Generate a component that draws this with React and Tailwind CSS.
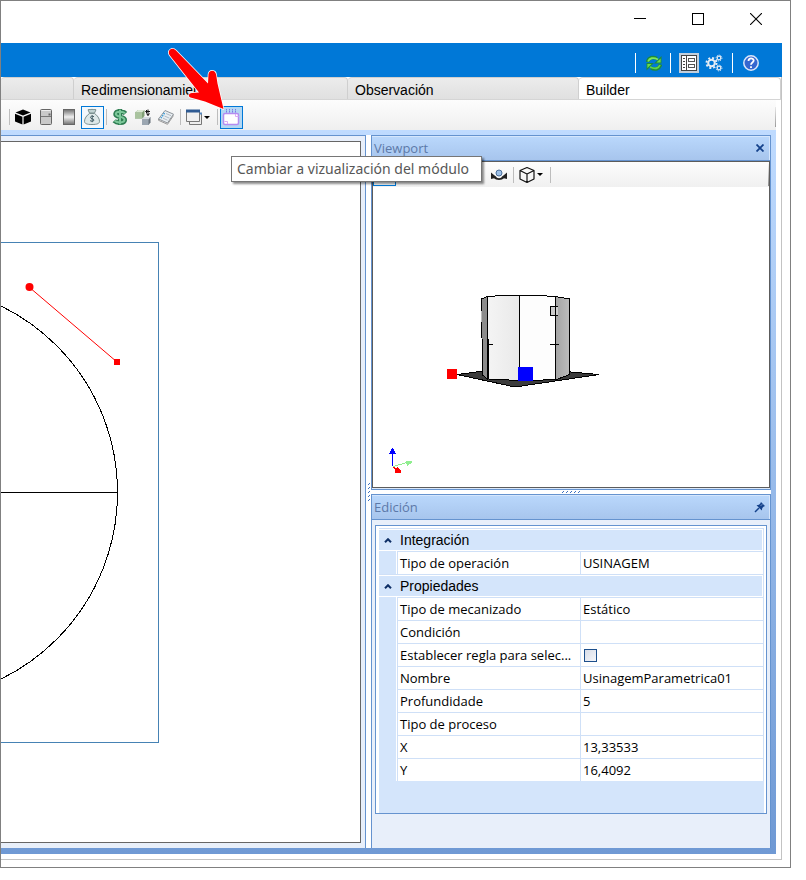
import clsx from "clsx";

const tabs = [
  { id: "blank", label: "", width: "w-[73px]" },
  { id: "resize", label: "Redimensionamiento", width: "w-[274px]" },
  { id: "notes", label: "Observación", width: "w-[231px]" },
  { id: "builder", label: "Builder", width: "flex-1", active: true },
];

const groups = [
  {
    title: "Integración",
    rows: [{ label: "Tipo de operación", value: "USINAGEM" }],
  },
  {
    title: "Propiedades",
    rows: [
      { label: "Tipo de mecanizado", value: "Estático" },
      { label: "Condición", value: "" },
      { label: "Establecer regla para selec...", checkbox: true },
      { label: "Nombre", value: "UsinagemParametrica01" },
      { label: "Profundidade", value: "5" },
      { label: "Tipo de proceso", value: "" },
      { label: "X", value: "13,33533" },
      { label: "Y", value: "16,4092" },
    ],
  },
];

/* ---------- icons ---------- */

function CubeIcon() {
  return (
    <svg width="18" height="18" viewBox="0 0 18 18">
      <path d="M9 1.5 16.5 4.5 9 7.5 1.5 4.5z" />
      <path d="M1 5.7 8.4 8.7V16.6L1 13.4z" />
      <path d="M17 5.7 9.6 8.7V16.6L17 13.4z" />
    </svg>
  );
}

function DoorIcon() {
  return (
    <svg width="14" height="18" viewBox="0 0 14 18">
      <rect x="1.5" y="1.5" width="11" height="15" rx="1" fill="#c9c9c9" stroke="#666" />
      <path d="M2 8.5h10" stroke="#777" />
      <path d="M2.5 2.5h9" stroke="#eee" />
      <path d="M9.5 5.5h2v2h-2z" fill="#666" />
    </svg>
  );
}

function MetalIcon() {
  return (
    <svg width="14" height="18" viewBox="0 0 14 18">
      <defs>
        <linearGradient id="metal" x1="0" y1="0" x2="0" y2="1">
          <stop offset="0" stopColor="#707070" />
          <stop offset="0.5" stopColor="#f0f0f0" />
          <stop offset="1" stopColor="#707070" />
        </linearGradient>
      </defs>
      <rect x="1.5" y="1.5" width="11" height="15" fill="url(#metal)" stroke="#666" />
    </svg>
  );
}

function MoneyBagIcon() {
  return (
    <svg width="18" height="18" viewBox="0 0 18 18">
      <path
        d="M6.5 5.5C3.5 7.5 1.5 10.5 1.5 13.3 1.5 15.5 3.5 16.5 9 16.5s7.5-1 7.5-3.2c0-2.8-2-5.8-5-7.8z"
        fill="#dde8e8"
        stroke="#7b9090"
      />
      <path d="M6.5 5 5 1.8c1.3-.8 2.5.3 4-.5 1.5.8 2.7-.3 4 .5L11.5 5z" fill="#c2d4d4" stroke="#7b9090" />
      <path d="M11 8.7c-1.500-1-3.700-.6-3.500.9.2 1.500 3.300.8 3.400 2.400.1 1.500-2.400 1.700-3.900.6M9.200 7.200v7" fill="none" stroke="#445e66" />
    </svg>
  );
}

function DollarIcon() {
  return (
    <svg width="18" height="18" viewBox="0 0 18 18" fill="none">
      <path
        d="M14.5 5.5C12.5 3.3 5 2.5 4.5 6 4 9.6 14 8 13.8 12c-.3 3.6-8 3.5-10.6.8M9 1v16"
        stroke="#2e7d52"
        strokeWidth="4.5"
      />
      <path
        d="M14 5.3C12 3.5 5 3 4.8 6c-.2 3.2 9 2 8.7 6-.3 3.2-7.500 3-9.800.8M9 1.8v14.400"
        stroke="#7cc799"
        strokeWidth="2"
      />
    </svg>
  );
}

function ConvertIcon() {
  return (
    <svg width="18" height="18" viewBox="0 0 18 18">
      <path d="M1 4.5 4 2h6.5v6L8 10.5H1z" fill="#7f9f74" />
      <path d="M1 4.5 4 2h6.5L8 4.5z" fill="#dbe8d4" />
      <path d="M1 4.5h7v6H1z" fill="#a9c39e" />
      <path d="M8 11.5 10 9h6.5v5.5L14.5 17H8z" fill="#68727c" />
      <path d="M8 11.5 10 9h6.5l-2 2.5z" fill="#d5dbe1" />
      <path d="M8 11.5h6.5V17H8z" fill="#9ba6b1" />
      <path d="M12 3.500h4M14 1.500v6M12.500 5.500 14 7.500l1.500-2M13 2l-1.500 1.500L13 5" fill="none" stroke="#111" />
    </svg>
  );
}

function SheetIcon() {
  return (
    <svg width="18" height="18" viewBox="0 0 18 18">
      <path d="M1.5 11 8 2.5l8.5 3.7L10.5 15z" fill="#e9eef2" stroke="#8e959b" />
      <path d="M1.5 11v1.3l9 4L16.5 7.5" fill="none" stroke="#999" />
      <path d="M7.5 5 4 10.2" stroke="#3c9bd6" strokeWidth="1.5" strokeDasharray="1.5 1" />
      <path d="m9 5.5 5 2.2M7.5 8l5 2.2M6 10.2l4.5 2" stroke="#b3bdc5" />
    </svg>
  );
}

function WindowsIcon() {
  return (
    <svg width="18" height="18" viewBox="0 0 18 18">
      <path d="M4.5 5.5h12v11h-12z" fill="#eee" stroke="#777" />
      <path d="M1.5 2.5h13v11h-13z" fill="#f0f0f0" stroke="#777" />
      <path d="M1 1.5h14v3H1z" fill="#2f5b93" />
      <path d="M15 4.5h2v2h-2z" fill="#5488c0" />
    </svg>
  );
}

function ModuleViewIcon() {
  return (
    <svg width="18" height="18" viewBox="0 0 18 18">
      <rect x="1.5" y="5.5" width="15" height="11" rx="1.5" fill="#fff" stroke="#b58cf0" strokeWidth="1.5" />
      <path d="M4.5 1v4M7.5 1v4M10.5 1v4M13.5 1v4" stroke="#7e78e8" strokeDasharray="1.5 .5" />
      <path d="M2.5 13.5h3v2.5M13.5 6v2.5h3" fill="none" stroke="#dba8f5" />
    </svg>
  );
}

function OrbitIcon() {
  return (
    <svg width="18" height="18" viewBox="0 0 18 18">
      <path d="M4 11c3 2.700 7 2.700 10 0" fill="none" stroke="#222" strokeWidth="2" />
      <path d="M1 13V6.500l6 5zM17 13V6.500l-6 5z" fill="#222" />
      <circle cx="9" cy="7" r="3" fill="#9ec1e8" stroke="#4c6f9a" />
    </svg>
  );
}

function WireCubeIcon() {
  return (
    <svg width="18" height="18" viewBox="0 0 18 18" fill="none" stroke="#111" strokeWidth="1.2" strokeLinejoin="round">
      <path d="M9 1.5 16 4.5v8.500L9 16.500 2 13V4.500zM2 4.500l7 3.500 7-3.500M9 8v8.500" />
    </svg>
  );
}

function RefreshIcon() {
  return (
    <svg width="16" height="18" viewBox="0 0 16 18" fill="none">
      <path d="M1.5 8C2.500 3.500 7 2.500 11 4.500" stroke="#1f8a3a" strokeWidth="3.6" />
      <path d="M15.500 2v7.500H8z" fill="#1f8a3a" />
      <path d="M2 7.500C3.500 4 7 3 12 5.500" stroke="#7fe85a" strokeWidth="1.8" />
      <path d="M14.600 4.500v4H10.500z" fill="#6ddd4e" />
      <path d="M14.500 10.500c-1 4.500-5.500 5.500-9.500 3.500" stroke="#1f8a3a" strokeWidth="3.6" />
      <path d="M.5 16.500V9H8z" fill="#1f8a3a" />
      <path d="M14 11c-1.500 3.500-5 4.500-10 2" stroke="#5fd548" strokeWidth="1.8" />
      <path d="M1.400 14V10h4.100z" fill="#6ddd4e" />
    </svg>
  );
}

function FormIcon() {
  return (
    <svg width="16" height="16" viewBox="0 0 16 16" shapeRendering="crispEdges">
      <path d="M.5.5h15v15H.5z" fill="#fff" stroke="#444" />
      <path d="M5.5 1v14" stroke="#444" />
      <path d="M1.5 3.5H4M1.5 6.5H4M1.5 9.5H4M1.5 12.5H4" stroke="#444" />
      <path d="M7.5 3.5h6v3h-6zM7.5 9.5h6v3h-6z" fill="none" stroke="#555" />
    </svg>
  );
}

function GearsIcon() {
  return (
    <svg width="18" height="18" viewBox="0 0 18 18" fill="none" stroke="#e6edf5">
      <circle cx="6.5" cy="9" r="3.3" strokeWidth="2" />
      <circle cx="6.5" cy="9" r="5" strokeWidth="2" strokeDasharray="2 1.93" />
      <circle cx="14" cy="4" r="1.8" strokeWidth="1.2" />
      <circle cx="14" cy="4" r="2.9" strokeWidth="1" strokeDasharray="1.2 1.08" />
      <circle cx="14" cy="14" r="1.8" strokeWidth="1.2" />
      <circle cx="14" cy="14" r="2.9" strokeWidth="1" strokeDasharray="1.2 1.08" />
    </svg>
  );
}

function HelpIcon() {
  return (
    <svg width="18" height="18" viewBox="0 0 18 18">
      <circle cx="9" cy="9" r="7.2" fill="#3567d0" stroke="#dbe6fa" strokeWidth="1.5" />
      <path d="M6.5 7c0-3.500 5.200-3.300 5.200-.4C11.700 8.500 9 8.600 9 10.800M9 12.200v1.800" fill="none" stroke="#fff" strokeWidth="1.8" />
    </svg>
  );
}

function PinIcon() {
  return (
    <svg width="12" height="12" viewBox="0 0 12 12">
      <path d="M7 1l4 4-1.500.7L8.300 7l-.5 2.500-5.300-5.300L5 3.700 6.300 2.500z" fill="#15428b" />
      <path d="M5 7 1 11" stroke="#15428b" strokeWidth="1.5" />
      <path d="M7 4.5 8 3.5" stroke="#c4dcfb" />
    </svg>
  );
}

function Caret() {
  return (
    <svg width="6" height="3" viewBox="0 0 6 3">
      <path d="M0 0h6L3 3z" />
    </svg>
  );
}

/* ---------- toolbar parts ---------- */

function ToolButton({ label, children, className }) {
  return (
    <button
      type="button"
      aria-label={label}
      className={clsx("flex h-[23px] w-[23px] shrink-0 items-center justify-center pr-px", className)}
    >
      {children}
    </button>
  );
}

function DropButton({ label, children }) {
  return (
    <button
      type="button"
      aria-label={label}
      className="flex h-[23px] w-8 shrink-0 items-center gap-px pl-0.5"
    >
      {children}
      <Caret />
    </button>
  );
}

function Separator() {
  return (
    <div className="flex w-[5px] shrink-0 justify-center">
      <div className="h-4 w-px bg-[#bdbdbd]" />
    </div>
  );
}

function TitleBar() {
  return (
    <header className="flex h-[42px] shrink-0 justify-end pr-[5px] pb-1.5">
      <button type="button" aria-label="Minimizar" className="flex w-[58px] items-center justify-center">
        <svg width="12" height="12" viewBox="0 0 12 12" shapeRendering="crispEdges">
          <path d="M0 5.5h12" stroke="#000" />
        </svg>
      </button>
      <button type="button" aria-label="Maximizar" className="flex w-[58px] items-center justify-center">
        <svg width="12" height="12" viewBox="0 0 12 12" shapeRendering="crispEdges">
          <path d="M.5.5h11v11H.5z" fill="none" stroke="#000" />
        </svg>
      </button>
      <button type="button" aria-label="Cerrar" className="flex w-[58px] items-center justify-center">
        <svg width="12" height="12" viewBox="0 0 12 12">
          <path d="M0 0l12 12M12 0 0 12" stroke="#000" strokeWidth="1.1" />
        </svg>
      </button>
    </header>
  );
}

function BlueBar() {
  return (
    <div className="flex h-[34px] shrink-0 items-center justify-end bg-[#0078d7] pt-1.5 pr-[22px]">
      <div className="mr-[10px] h-5 w-px bg-white" />
      <button type="button" aria-label="Actualizar">
        <RefreshIcon />
      </button>
      <div className="mx-2 h-5 w-px bg-white" />
      <button type="button" aria-label="Formulario" className="mr-1.5 flex size-5 items-center justify-center bg-[#c2cfdc]">
        <FormIcon />
      </button>
      <button type="button" aria-label="Configuración">
        <GearsIcon />
      </button>
      <div className="mx-[9px] h-5 w-px bg-white" />
      <button type="button" aria-label="Ayuda">
        <HelpIcon />
      </button>
    </div>
  );
}

function TabStrip() {
  return (
    <div role="tablist" className="flex h-[23px] shrink-0 border-b border-[#d5d5d5]">
      {tabs.map((tab) => (
        <button
          key={tab.id}
          type="button"
          role="tab"
          aria-selected={!!tab.active}
          aria-label={tab.label || "Inicio"}
          className={clsx(
            "rounded-t-sm border-t border-r pt-0.5 pl-[7px] text-left font-['Liberation_Sans',Arial,sans-serif] text-sm",
            tab.width,
            tab.active
              ? "border-[#d0d0d0] bg-white"
              : "border-[#cfcfcf] bg-linear-to-b from-[#ececec] to-[#e0e0e0]"
          )}
        >
          {tab.label}
        </button>
      ))}
    </div>
  );
}

function MainToolbar() {
  return (
    <div className="mr-[5px] flex h-[30px] shrink-0 items-center bg-linear-to-b from-[#fdfdfd] to-[#efefef] pt-1 pl-1.5">
      <Separator />
      <ToolButton label="Módulo"><CubeIcon /></ToolButton>
      <ToolButton label="Puerta"><DoorIcon /></ToolButton>
      <ToolButton label="Material"><MetalIcon /></ToolButton>
      <ToolButton label="Presupuesto" className="border border-[#0078d7] bg-[#f3f8fc]"><MoneyBagIcon /></ToolButton>
      <Separator />
      <ToolButton label="Precio"><DollarIcon /></ToolButton>
      <ToolButton label="Convertir"><ConvertIcon /></ToolButton>
      <ToolButton label="Lista"><SheetIcon /></ToolButton>
      <Separator />
      <DropButton label="Ventanas"><WindowsIcon /></DropButton>
      <Separator />
      <ToolButton label="Cambiar a vizualización del módulo" className="border border-[#0078d7] bg-[#b3d7f3]">
        <ModuleViewIcon />
      </ToolButton>
      <div className="ml-auto h-5 w-px bg-linear-to-b from-[#e8e8e8] to-[#9a9a9a]" />
    </div>
  );
}

/* ---------- panels ---------- */

function DrawingCanvas() {
  return (
    <section className="flex min-w-0 flex-1 border-t border-r border-[#6593cf] bg-[#e8effa] py-[5px] pr-1">
      <div className="min-w-0 flex-1 overflow-hidden border-y border-r border-[#666] bg-white">
        <svg width="359" height="690" viewBox="1 142 359 690" fill="none" shapeRendering="crispEdges">
          <path d="M1 242.5H158.5V742.5H1" stroke="#4682b4" />
          <circle cx="-90" cy="492.5" r="207.5" stroke="#000" />
          <path d="M1 492.5H118" stroke="#000" />
          <path d="M29 287 117 362" stroke="#f00" shapeRendering="auto" />
          <circle cx="29.5" cy="287" r="4" fill="#f00" shapeRendering="auto" />
          <path d="M114 359h6v6h-6z" fill="#f00" />
        </svg>
      </div>
    </section>
  );
}

function PanelHeader({ title, children }) {
  return (
    <div className="flex h-[25px] shrink-0 items-center justify-between border-b border-[#6593cf] bg-linear-to-b from-[#bad8fc] to-[#a7c5ed] pr-1 pl-0.5 shadow-[inset_0_1px_0_#d5e6fc,inset_-1px_0_0_#d5e6fc]">
      <h2 className="pt-0.5 text-[13px] text-[#5c79a8]">{title}</h2>
      {children}
    </div>
  );
}

function Scene() {
  return (
    <svg width="396" height="300" viewBox="373 187 396 300" fill="none" shapeRendering="crispEdges">
      <defs>
        <linearGradient id="sideRight" x1="0" y1="0" x2="1" y2="0">
          <stop offset="0" stopColor="#a3a3a3" />
          <stop offset="1" stopColor="#bcbcbc" />
        </linearGradient>
        <linearGradient id="front" x1="0" y1="0" x2="1" y2="0">
          <stop offset="0" stopColor="#f4f4f4" />
          <stop offset="1" stopColor="#e9e9e9" />
        </linearGradient>
      </defs>

      {/* ground */}
      <path d="M457 374.5 515 367 599 374.5 515 387z" fill="#3c3c3c" stroke="#000" />

      {/* body */}
      <path d="M481.5 299 487.5 296.5V379L482.5 375z" fill="#8c8c8c" stroke="#000" />
      <path d="M487.5 296.5 503 295.5H519.5V380.5L488.5 379z" fill="url(#front)" stroke="#000" />
      <path d="M519.5 295.5H538L555.5 296.5V379.5L519.5 381z" fill="#fdfdfd" stroke="#000" />
      <path d="M555.5 296.5 569.5 299V374.5L555.5 380z" fill="url(#sideRight)" stroke="#000" />
      <path d="M481.5 311v11" stroke="#bbb" />
      <path d="M488 344.5h5M550 344.5h9" stroke="#000" />
      <path d="M558 306.5h-7.5v9H558" fill="#ccc" stroke="#000" />
      <path d="M555.5 306v10" stroke="#000" />

      <path d="M447 369h10v10h-10z" fill="#f00" />
      <path d="M518 367h15v14h-15z" fill="#00f" />

      {/* axes */}
      <path d="M392.5 466V452" stroke="#00f" />
      <path d="M392.5 447.5 396 454h-7z" fill="#00f" />
      <path d="M393 466.5 407 462.5" stroke="#90ee90" />
      <path d="M406 461h6v2l-5 3z" fill="#90ee90" />
      <path d="M393 467l3 2" stroke="#f00" />
      <path d="M395 469l3-2 3 4v2h-6z" fill="#f00" />
    </svg>
  );
}

function ViewportPanel() {
  return (
    <section className="flex min-h-0 flex-1 flex-col border border-[#6593cf] bg-[#dce9fa] pb-px">
      <PanelHeader title="Viewport">
        <button type="button" aria-label="Cerrar panel" className="mr-0.5">
          <svg width="8" height="8" viewBox="0 0 8 8">
            <path d="M.5.5l7 7M7.5.5l-7 7" stroke="#15428b" strokeWidth="1.8" />
          </svg>
        </button>
      </PanelHeader>
      <div className="flex min-h-0 flex-1 flex-col border border-[#5c5c5c] bg-white">
        <div className="flex h-[25px] shrink-0 items-center bg-linear-to-b from-[#fdfdfd] to-[#f0f0f0]">
          <ToolButton label="Seleccionar" className="border border-[#0078d7] bg-[#f3f8fc]" />
          <ToolButton label="Girar" />
          <ToolButton label="Mover" />
          <ToolButton label="Acercar" />
          <ToolButton label="Encuadrar" />
          <ToolButton label="Orbitar"><OrbitIcon /></ToolButton>
          <Separator />
          <DropButton label="Vista"><WireCubeIcon /></DropButton>
          <Separator />
          <div className="ml-auto h-[22px] w-px bg-linear-to-b from-[#f4f4f4] to-[#8a8a8a]" />
        </div>
        <div className="min-h-0 flex-1 overflow-hidden">
          <Scene />
        </div>
      </div>
    </section>
  );
}

function PropertyRow({ row }) {
  const id = `prop-${row.label.slice(0, 5).toLowerCase().replace(/\W/g, "")}`;
  return (
    <tr className="h-[23px]">
      <td className="border-r border-white bg-[#d4e5fb] p-0" />
      <th scope="row" className="border-t border-l border-[#cfe0f7] bg-white py-0 pr-1 pl-0.5 text-left font-normal whitespace-nowrap">
        {row.checkbox ? <label htmlFor={id}>{row.label}</label> : row.label}
      </th>
      <td className="border-x border-t border-[#cfe0f7] bg-white py-0 pl-0.5">
        {row.checkbox ? (
          <input
            id={id}
            type="checkbox"
            className="ml-px block size-[13px] appearance-none border border-[#1d4f8c] bg-linear-to-br from-[#d8dde8] to-[#f5f6f9]"
          />
        ) : (
          row.value
        )}
      </td>
    </tr>
  );
}

function PropertyGrid() {
  return (
    <div className="flex flex-1 flex-col border border-[#6593cf] bg-white pt-0.5 pr-0.5 pl-[3px]">
      <table className="w-full table-fixed border-separate border-spacing-0 text-[13px] leading-5">
        <colgroup>
          <col className="w-[18px]" />
          <col className="w-[183px]" />
          <col />
        </colgroup>
        {groups.map((group) => (
          <tbody key={group.title}>
            <tr className="h-[23px]">
              <th colSpan={3} scope="rowgroup" className="border-t border-r border-[#cfe0f7] p-0 text-left font-normal">
                <button
                  type="button"
                  className="my-px flex h-5 w-[calc(100%-1px)] items-center bg-[#d4e5fb] pl-[5px] font-['Liberation_Sans',Arial,sans-serif] text-sm"
                >
                  <svg width="8" height="5" viewBox="0 0 8 5" className="mr-2">
                    <path d="M1 4.2 4 1.2l3 3" fill="none" stroke="#0e2f66" strokeWidth="2" />
                  </svg>
                  {group.title}
                </button>
              </th>
            </tr>
            {group.rows.map((row) => (
              <PropertyRow key={row.label} row={row} />
            ))}
          </tbody>
        ))}
      </table>
      <div className="flex-1 bg-[#d4e5fb]" />
    </div>
  );
}

function EditPanel() {
  return (
    <section className="flex h-[354px] shrink-0 flex-col border border-b-0 border-[#6593cf] bg-[#e8effa]">
      <PanelHeader title="Edición">
        <button type="button" aria-label="Fijar panel">
          <PinIcon />
        </button>
      </PanelHeader>
      <div className="flex flex-1 flex-col px-[3px] pt-[5px] pb-[34px]">
        <PropertyGrid />
      </div>
    </section>
  );
}

function Grip({ vertical }) {
  return vertical ? (
    <svg width="4" height="20" viewBox="0 0 4 20" stroke="#3b6fc0">
      <path d="M1 3l2-2M1 7l2-2M1 11l2-2M1 15l2-2M1 19l2-2" />
    </svg>
  ) : (
    <svg width="20" height="4" viewBox="0 0 20 4" stroke="#3b6fc0">
      <path d="M1 3l2-2M5 3l2-2M9 3l2-2M13 3l2-2M17 3l2-2" />
    </svg>
  );
}

function RedArrow() {
  return (
    <svg className="pointer-events-none absolute top-11 left-[164px]" width="66" height="70" viewBox="165 45 66 70">
      <path
        d="M169.5 55C167 50.5 172 46.5 176 50.5L208 83.5 208.5 74C209.5 69.5 215.5 69.5 216.2 75L217.5 83.5 223.5 109 205 101.5 190.5 97.5C187.5 96 189 93 192 93L199 92.5z"
        fill="#f00"
        stroke="#fff"
        strokeWidth="1.5"
        paintOrder="stroke"
        strokeLinejoin="round"
      />
    </svg>
  );
}

export default function App() {
  return (
    <div className="h-screen min-h-[720px] bg-white pr-[15px] pb-3 font-['Open_Sans','Noto_Sans',sans-serif] text-black">
      <div className="relative flex h-full flex-col border border-[#808080] bg-white">
        <TitleBar />
        <div className="mr-2 mb-[7px] flex min-h-0 flex-1 flex-col">
          <BlueBar />
          <div className="flex min-h-0 flex-1 flex-col border-r border-b border-[#c3c3c3] pb-[5px]">
            <TabStrip />
            <MainToolbar />
            <main className="mr-[5px] flex min-h-0 flex-1 bg-linear-to-b from-[#bfdbff] to-[#6f99d4] pt-[5px] pr-[5px] pb-1.5">
              <DrawingCanvas />
              <div className="flex w-[5px] shrink-0 items-center justify-center bg-white">
                <Grip vertical />
              </div>
              <div className="flex w-[400px] shrink-0 flex-col">
                <ViewportPanel />
                <div className="flex h-1 shrink-0 items-center justify-center bg-white">
                  <Grip />
                </div>
                <EditPanel />
              </div>
            </main>
          </div>
        </div>

        <div
          role="tooltip"
          className="absolute top-[155px] left-[230px] border border-[#767676] bg-white pr-3 pl-[5px] font-['Noto_Sans',sans-serif] text-sm leading-6 whitespace-nowrap text-[#575757] shadow-[2px_2px_2px_rgba(0,0,0,0.45)]"
        >
          Cambiar a vizualización del módulo
        </div>
        <RedArrow />
      </div>
    </div>
  );
}
